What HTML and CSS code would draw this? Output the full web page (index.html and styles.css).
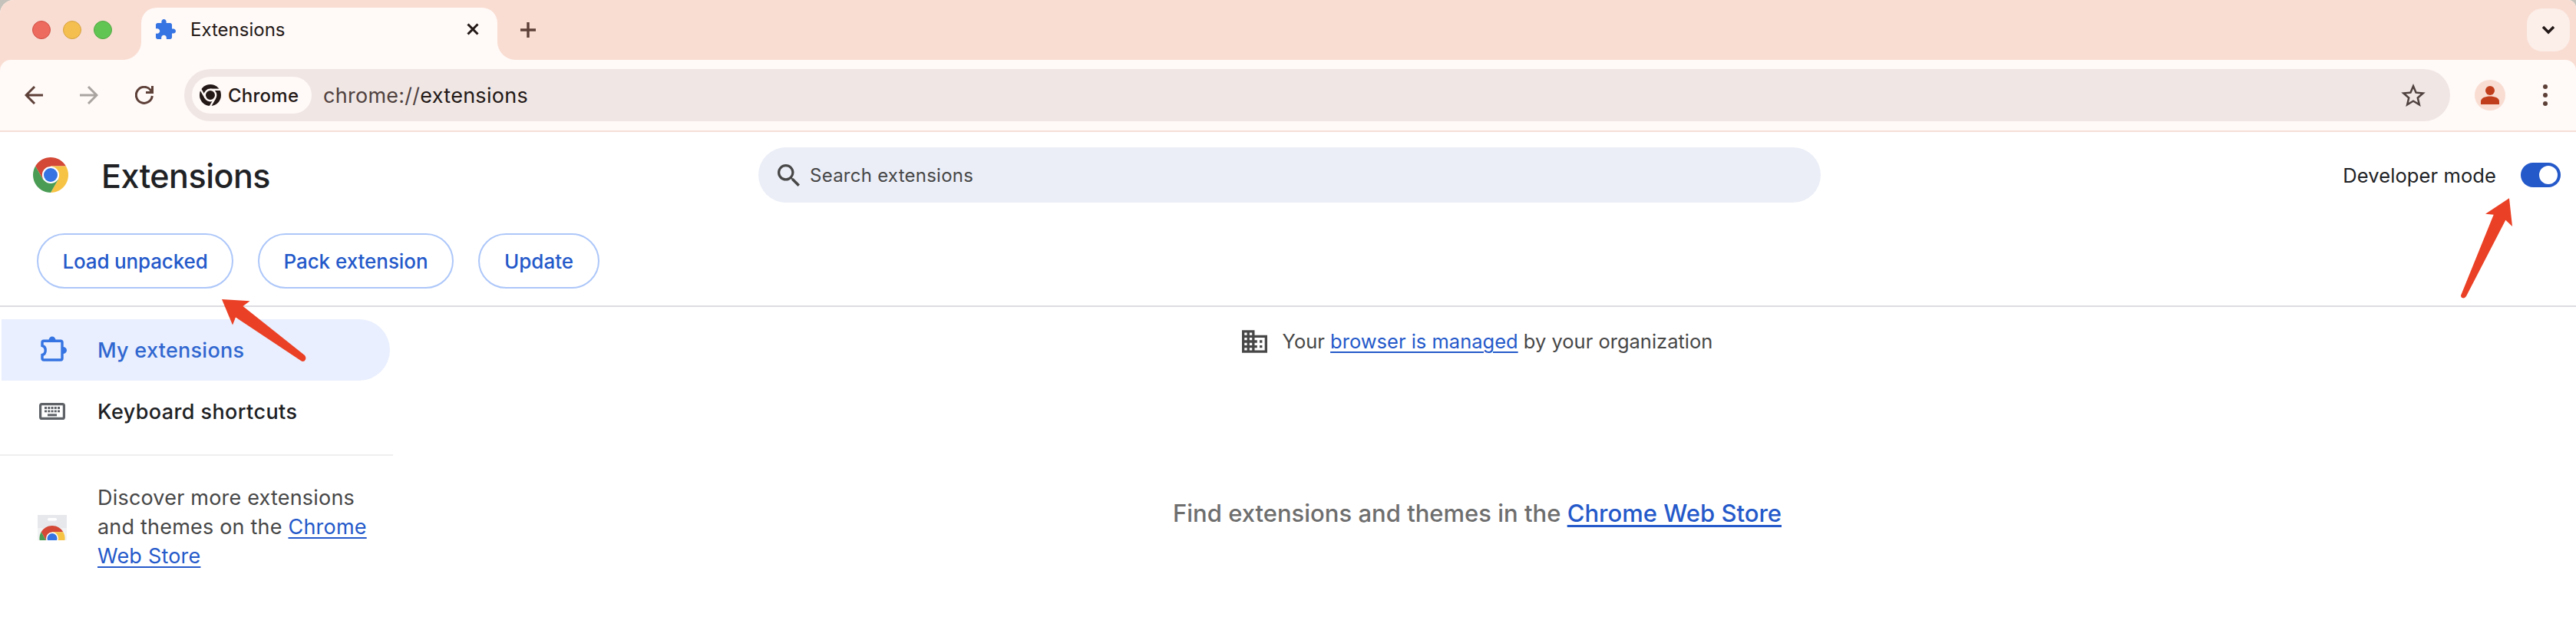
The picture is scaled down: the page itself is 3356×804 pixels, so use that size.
FILE: index.html
```html
<!DOCTYPE html>
<html lang="en">
<head>
<meta charset="utf-8">
<title>Extensions</title>
<link rel="stylesheet" href="styles.css">
</head>
<body>
<div class="window">
  <div class="tabstrip">
    <div class="lights"><i class="light red"></i><i class="light amber"></i><i class="light green"></i></div>
    <div class="tab">
      <svg class="tab-icon" viewBox="2 1 21 21"><path fill="#3574e2" d="M20.5 11H19V7c0-1.1-.9-2-2-2h-4V3.500C13 2.120 11.880 1 10.500 1S8 2.120 8 3.500V5H4c-1.100 0-1.990.900-1.990 2v3.800H3.500c1.490 0 2.700 1.210 2.700 2.700s-1.210 2.700-2.700 2.700H2V20c0 1.100.900 2 2 2h3.800v-1.500c0-1.490 1.210-2.700 2.700-2.700 1.490 0 2.700 1.210 2.700 2.700V22H17c1.100 0 2-.900 2-2v-4h1.500c1.380 0 2.500-1.120 2.500-2.500S21.880 11 20.500 11z"/></svg>
      <span class="tab-title">Extensions</span>
      <svg class="tab-close" viewBox="0 0 16 16"><path d="M1.500 1.500l13 13M14.500 1.500l-13 13" stroke="#231917" stroke-width="3"/></svg>
    </div>
    <svg class="new-tab" viewBox="0 0 20 20"><path d="M10 0v20M0 10h20" stroke="#5d4038" stroke-width="3.400"/></svg>
    <div class="tab-search"><svg width="18" height="12" viewBox="0 0 18 12"><path d="M2 2l7 7 7-7" fill="none" stroke="#231917" stroke-width="3.400"/></svg></div>
  </div>
  <div class="toolbar">
    <svg class="nav" viewBox="0 0 24 24"><path d="M24 12H2M13 1L2 12l11 11" fill="none" stroke="#5d4038" stroke-width="3"/></svg>
    <svg class="nav" viewBox="0 0 24 24"><path d="M0 12h22M11 1l11 11-11 11" fill="none" stroke="#aaa4a1" stroke-width="3"/></svg>
    <svg class="nav" viewBox="0 0 24 24"><path d="M22.300 13A10.500 10.500 0 1 1 20 5.200L22 8M22.500 0v8.500H14" fill="none" stroke="#5d4038" stroke-width="3"/></svg>
    <div class="omnibox">
      <div class="chip">
        <svg width="28" height="28" viewBox="-14 -14 28 28"><circle r="14" fill="#231917"/><circle r="7.200" fill="none" stroke="#fff9f7" stroke-width="2.400"/><g stroke="#fff9f7" stroke-width="2.400"><path d="M0-7.200H13"/><path d="M0-7.200H13" transform="rotate(120)"/><path d="M0-7.200H13" transform="rotate(240)"/></g></svg>
        <span class="chip-label">Chrome</span>
      </div>
      <span class="url"><span class="scheme">chrome://</span>extensions</span>
      <svg class="star" viewBox="2 2 20 19"><path fill="#50423f" d="M22 9.240l-7.190-.620L12 2 9.190 8.630 2 9.240l5.460 4.730L5.820 21 12 17.270 18.180 21l-1.630-7.030L22 9.240zM12 15.400l-3.760 2.270 1-4.280-3.320-2.880 4.380-.380L12 6.100l1.710 4.040 4.380.380-3.320 2.880 1 4.280L12 15.400z"/></svg>
    </div>
    <svg class="avatar" viewBox="0 0 40 40"><circle cx="20" cy="20" r="20" fill="#f9ddd2"/><circle cx="20" cy="14" r="6" fill="#c13e1c"/><path d="M8 32v-4c0-4.500 6-6.600 12-6.600s12 2.100 12 6.600v4z" fill="#c13e1c"/></svg>
    <svg class="kebab" viewBox="0 0 6 28"><g fill="#5d4038"><circle cx="3" cy="3" r="3"/><circle cx="3" cy="14" r="3"/><circle cx="3" cy="25" r="3"/></g></svg>
  </div>

  <header class="header">
    <div class="header-row">
      <svg class="logo" viewBox="-24 -24 48 48"><path fill="#d34836" d="M-20.780-12A24 24 0 0 1 20.780-12H0L-10.390 6z"/><path fill="#f6c344" transform="rotate(120)" d="M-20.780-12A24 24 0 0 1 20.780-12H0L-10.390 6z"/><path fill="#4a9c54" transform="rotate(240)" d="M-20.780-12A24 24 0 0 1 20.780-12H0L-10.390 6z"/><circle r="11.600" fill="#fff"/><circle r="9.400" fill="#3574e2"/></svg>
      <h1 class="title">Extensions</h1>
      <div class="search">
        <svg width="29" height="29" viewBox="3 3 17.500 17.500"><path fill="#474747" d="M15.500 14h-.790l-.280-.270A6.471 6.471 0 0 0 16 9.500 6.500 6.500 0 1 0 9.500 16c1.610 0 3.090-.590 4.230-1.570l.270.280v.790l5 4.990L20.490 19l-4.990-5zm-6 0C7.010 14 5 11.990 5 9.500S7.010 5 9.500 5 14 7.010 14 9.500 11.990 14 9.500 14z"/></svg>
        <span class="search-text">Search extensions</span>
      </div>
      <div class="dev"><span class="dev-label">Developer mode</span><span class="toggle"><i class="thumb"></i></span></div>
    </div>
    <div class="actions">
      <button class="btn load">Load unpacked</button>
      <button class="btn pack">Pack extension</button>
      <button class="btn update">Update</button>
    </div>
  </header>

  <main class="main">
    <nav class="sidebar">
      <a class="item active">
        <svg class="item-icon" viewBox="0 0 34 33"><path d="M2 12.500V8.200Q2 6.200 4 6.200H26Q28 6.200 28 8.200V29Q28 31 26 31H4Q2 31 2 29V24.500C4.800 23.800 6.200 21.500 6.200 18.500S4.800 13.200 2 12.500Z" fill="none" stroke="#3574e2" stroke-width="3.400"/><path d="M10.500 5.500a4.500 5 0 0 1 9 0zM29 14a5 4.500 0 0 1 0 9z" fill="#3574e2"/></svg>
        <span>My extensions</span>
      </a>
      <a class="item shortcuts">
        <svg class="item-icon kb" viewBox="0 0 34 22"><rect x="1.600" y="1.600" width="30.800" height="18.800" rx="2" fill="none" stroke="#5f6368" stroke-width="3.200"/><path d="M7 6.500H27M7 10.800H27" stroke="#5f6368" stroke-width="2.800" stroke-dasharray="3 1.250"/><path d="M11 15.800H23" stroke="#5f6368" stroke-width="3"/></svg>
        <span>Keyboard shortcuts</span>
      </a>
      <div class="discover">
        <svg class="store" width="38" height="33" viewBox="0 0 38 33"><path d="M0 0h38v33H0z" fill="#f1f2f3"/><path d="M0 0h38v17H0z" fill="#e7e8ec"/><rect x="13" y="4" width="12" height="3.500" rx="1.700" fill="#fff"/><g transform="translate(19 30.500) scale(.69)"><path fill="#d34836" d="M-20.780-12A24 24 0 0 1 20.780-12H0L-10.390 6z"/><path fill="#f6c344" transform="rotate(120)" d="M-20.780-12A24 24 0 0 1 20.780-12H0L-10.390 6z"/><path fill="#4a9c54" transform="rotate(240)" d="M-20.780-12A24 24 0 0 1 20.780-12H0L-10.390 6z"/><circle r="11.600" fill="#fff"/><circle r="9.400" fill="#3574e2"/></g></svg>
        <p class="discover-text">Discover more extensions<br>and themes on the <a class="link">Chrome</a><br><a class="link">Web Store</a></p>
      </div>
    </nav>
    <section class="content">
      <div class="managed">
        <svg width="33" height="30" viewBox="2 3 20 18"><path fill="#474747" d="M12 7V3H2v18h20V7H12zM6 19H4v-2h2v2zm0-4H4v-2h2v2zm0-4H4V9h2v2zm0-4H4V5h2v2zm4 12H8v-2h2v2zm0-4H8v-2h2v2zm0-4H8V9h2v2zm0-4H8V5h2v2zm10 12h-8v-2h2v-2h-2v-2h2v-2h-2V9h8v10zm-2-8h-2v2h2v-2zm0 4h-2v2h2v-2z"/></svg>
        <span>Your <a class="link">browser is managed</a> by your organization</span>
      </div>
      <p class="find">Find extensions and themes in the <a class="link">Chrome Web Store</a></p>
    </section>
  </main>

  <svg class="arrow arrow-load" width="112" height="84" viewBox="288 388 112 84"><path d="M289 390L325.500 392.300 316.500 399 397 463Q400 467 396.500 470.500Q394 471.500 392 470L307 413.500 303 423.500Z" fill="#ea4025"/></svg>
  <svg class="arrow arrow-dev" width="72" height="134" viewBox="3204 256 72 134"><path d="M3269 258.300L3238 278.700 3248.700 279.700 3206 385Q3206 388.500 3210 388.500Q3212.300 388 3213.500 385L3264.300 286.700 3273 295Z" fill="#ea4025"/></svg>
</div>
</body>
</html>
```
FILE: styles.css
```css
* { box-sizing: border-box; }
body { margin: 0; background: #c4c2ba; font-family: Inter, "Liberation Sans", sans-serif; color: #202124; }
svg { display: block; flex: none; }
h1, p { margin: 0; }
.window { position: relative; width: 3356px; height: 804px; display: flex; flex-direction: column; background: #fff; border-radius: 18px 10px 0 0; overflow: hidden; }

.tabstrip { height: 92px; margin-bottom: -14px; padding: 0 8px 14px 42px; display: flex; align-items: center; background: #f9ddd2; flex: none; }
.lights { display: flex; gap: 16px; width: 142px; }
.light { width: 24px; height: 24px; border-radius: 50%; border: 1px solid; }
.red { background: #ec6a5e; border-color: #d05147; }
.amber { background: #f4bf4f; border-color: #d6a243; }
.green { background: #61c554; border-color: #52a842; }
.tab { position: relative; align-self: flex-end; width: 464px; height: 68px; padding: 0 24px 12px 19px; display: flex; align-items: center; background: #fff9f7; border-radius: 20px 20px 0 0; }
.tab::before, .tab::after { content: ""; position: absolute; bottom: 0; width: 24px; height: 24px; }
.tab::before { right: 100%; background: radial-gradient(circle at 0 0, transparent 23.500px, #fff9f7 24.500px); }
.tab::after { left: 100%; background: radial-gradient(circle at 100% 0, transparent 23.500px, #fff9f7 24.500px); }
.tab-icon { width: 26px; height: 26px; }
.tab-title { margin-left: 19px; font-size: 24px; color: #231917; flex: 1; }
.tab-close { width: 16px; height: 16px; }
.new-tab { width: 20px; height: 20px; margin-left: 30px; }
.tab-search { margin-left: auto; width: 56px; height: 56px; border-radius: 20px; background: #fceee9; display: flex; align-items: center; justify-content: center; }

.toolbar { position: relative; height: 94px; padding: 0 37px 0 32px; display: flex; align-items: center; background: #fff9f7; border-bottom: 2px solid #f5dfd8; border-radius: 14px 14px 0 0; flex: none; }
.nav { width: 24px; height: 24px; margin-right: 48px; }
.omnibox { width: 2952px; height: 68px; margin-left: -8px; padding: 0 32px 0 10px; border-radius: 34px; background: #f0e7e5; display: flex; align-items: center; }
.chip { width: 156px; height: 48px; padding-left: 10px; border-radius: 24px; background: #fff9f7; display: flex; align-items: center; gap: 9px; }
.chip-label { font-size: 24px; font-weight: 500; letter-spacing: .25px; color: #231917; }
.url { margin-left: 15px; font-size: 27px; letter-spacing: .27px; color: #231917; }
.scheme { color: #50423f; }
.star { width: 32px; height: 30px; margin-left: auto; }
.avatar { width: 40px; height: 40px; margin-left: 32px; }
.kebab { width: 6px; height: 28px; margin-left: auto; }

.header { height: 228px; border-bottom: 2px solid #dcdce2; flex: none; }
.header-row { height: 112px; padding: 0 20px 0 43px; display: flex; align-items: center; }
.logo { width: 46px; height: 46px; }
.title { width: 856px; margin-left: 43px; padding-top: 2px; font-size: 43px; font-weight: 500; line-height: 1; letter-spacing: -.5px; }
.search { width: 1384px; height: 72px; padding-left: 25px; border-radius: 36px; background: #ebeef7; display: flex; align-items: center; gap: 13px; color: #474747; font-size: 24px; letter-spacing: .25px; }
.dev { margin-left: auto; display: flex; align-items: center; gap: 32px; font-size: 25.500px; letter-spacing: .1px; }
.toggle { width: 52px; height: 32px; border-radius: 16px; background: #2459ca; padding: 4px; display: flex; justify-content: flex-end; }
.thumb { width: 24px; height: 24px; border-radius: 50%; background: #fff; }
.actions { display: flex; gap: 32px; padding: 20px 48px 0; }
.btn { height: 72px; padding: 0; border: 2px solid #adc7f9; border-radius: 36px; background: #fff; color: #2459ca; font: 500 26px Inter, "Liberation Sans", sans-serif; }
.load { width: 256px; letter-spacing: -.15px; }
.pack { width: 255px; letter-spacing: -.05px; }
.update { width: 158px; }

.main { display: flex; flex: 1; }
.sidebar { width: 512px; padding-top: 16px; flex: none; }
.item { height: 80px; margin: 0 4px 0 2px; padding-left: 51px; display: flex; align-items: center; font-size: 27px; font-weight: 500; letter-spacing: .27px; }
.active { background: #e9effe; border-radius: 0 40px 40px 0; color: #3067d0; }
.shortcuts { letter-spacing: .4px; }
.item-icon { width: 34px; height: 33px; margin-right: 40px; margin-top: -4px; }
.kb { height: 22px; margin-left: -2px; margin-right: 42px; margin-top: 0; }
.discover { margin-top: 16px; border-top: 2px solid #efeff0; padding: 36px 0 0 49px; display: flex; align-items: center; gap: 40px; color: #474747; }
.discover-text { font-size: 27px; line-height: 38px; letter-spacing: .2px; white-space: nowrap; }
.link { color: #2459ca; text-decoration: underline; text-decoration-thickness: 2px; text-underline-offset: 4px; text-decoration-skip-ink: auto; }
.content { flex: 1; padding-right: 19px; display: flex; flex-direction: column; align-items: center; color: #474747; }
.managed { height: 89px; display: flex; align-items: center; gap: 20px; font-size: 25.500px; }
.find { margin-top: 160px; font-size: 31px; line-height: 40px; font-weight: 500; color: #6e6e6e; }
.find .link { text-decoration-thickness: 3px; }

.arrow { position: absolute; }
.arrow-load { left: 288px; top: 388px; }
.arrow-dev { left: 3204px; top: 256px; }
```
